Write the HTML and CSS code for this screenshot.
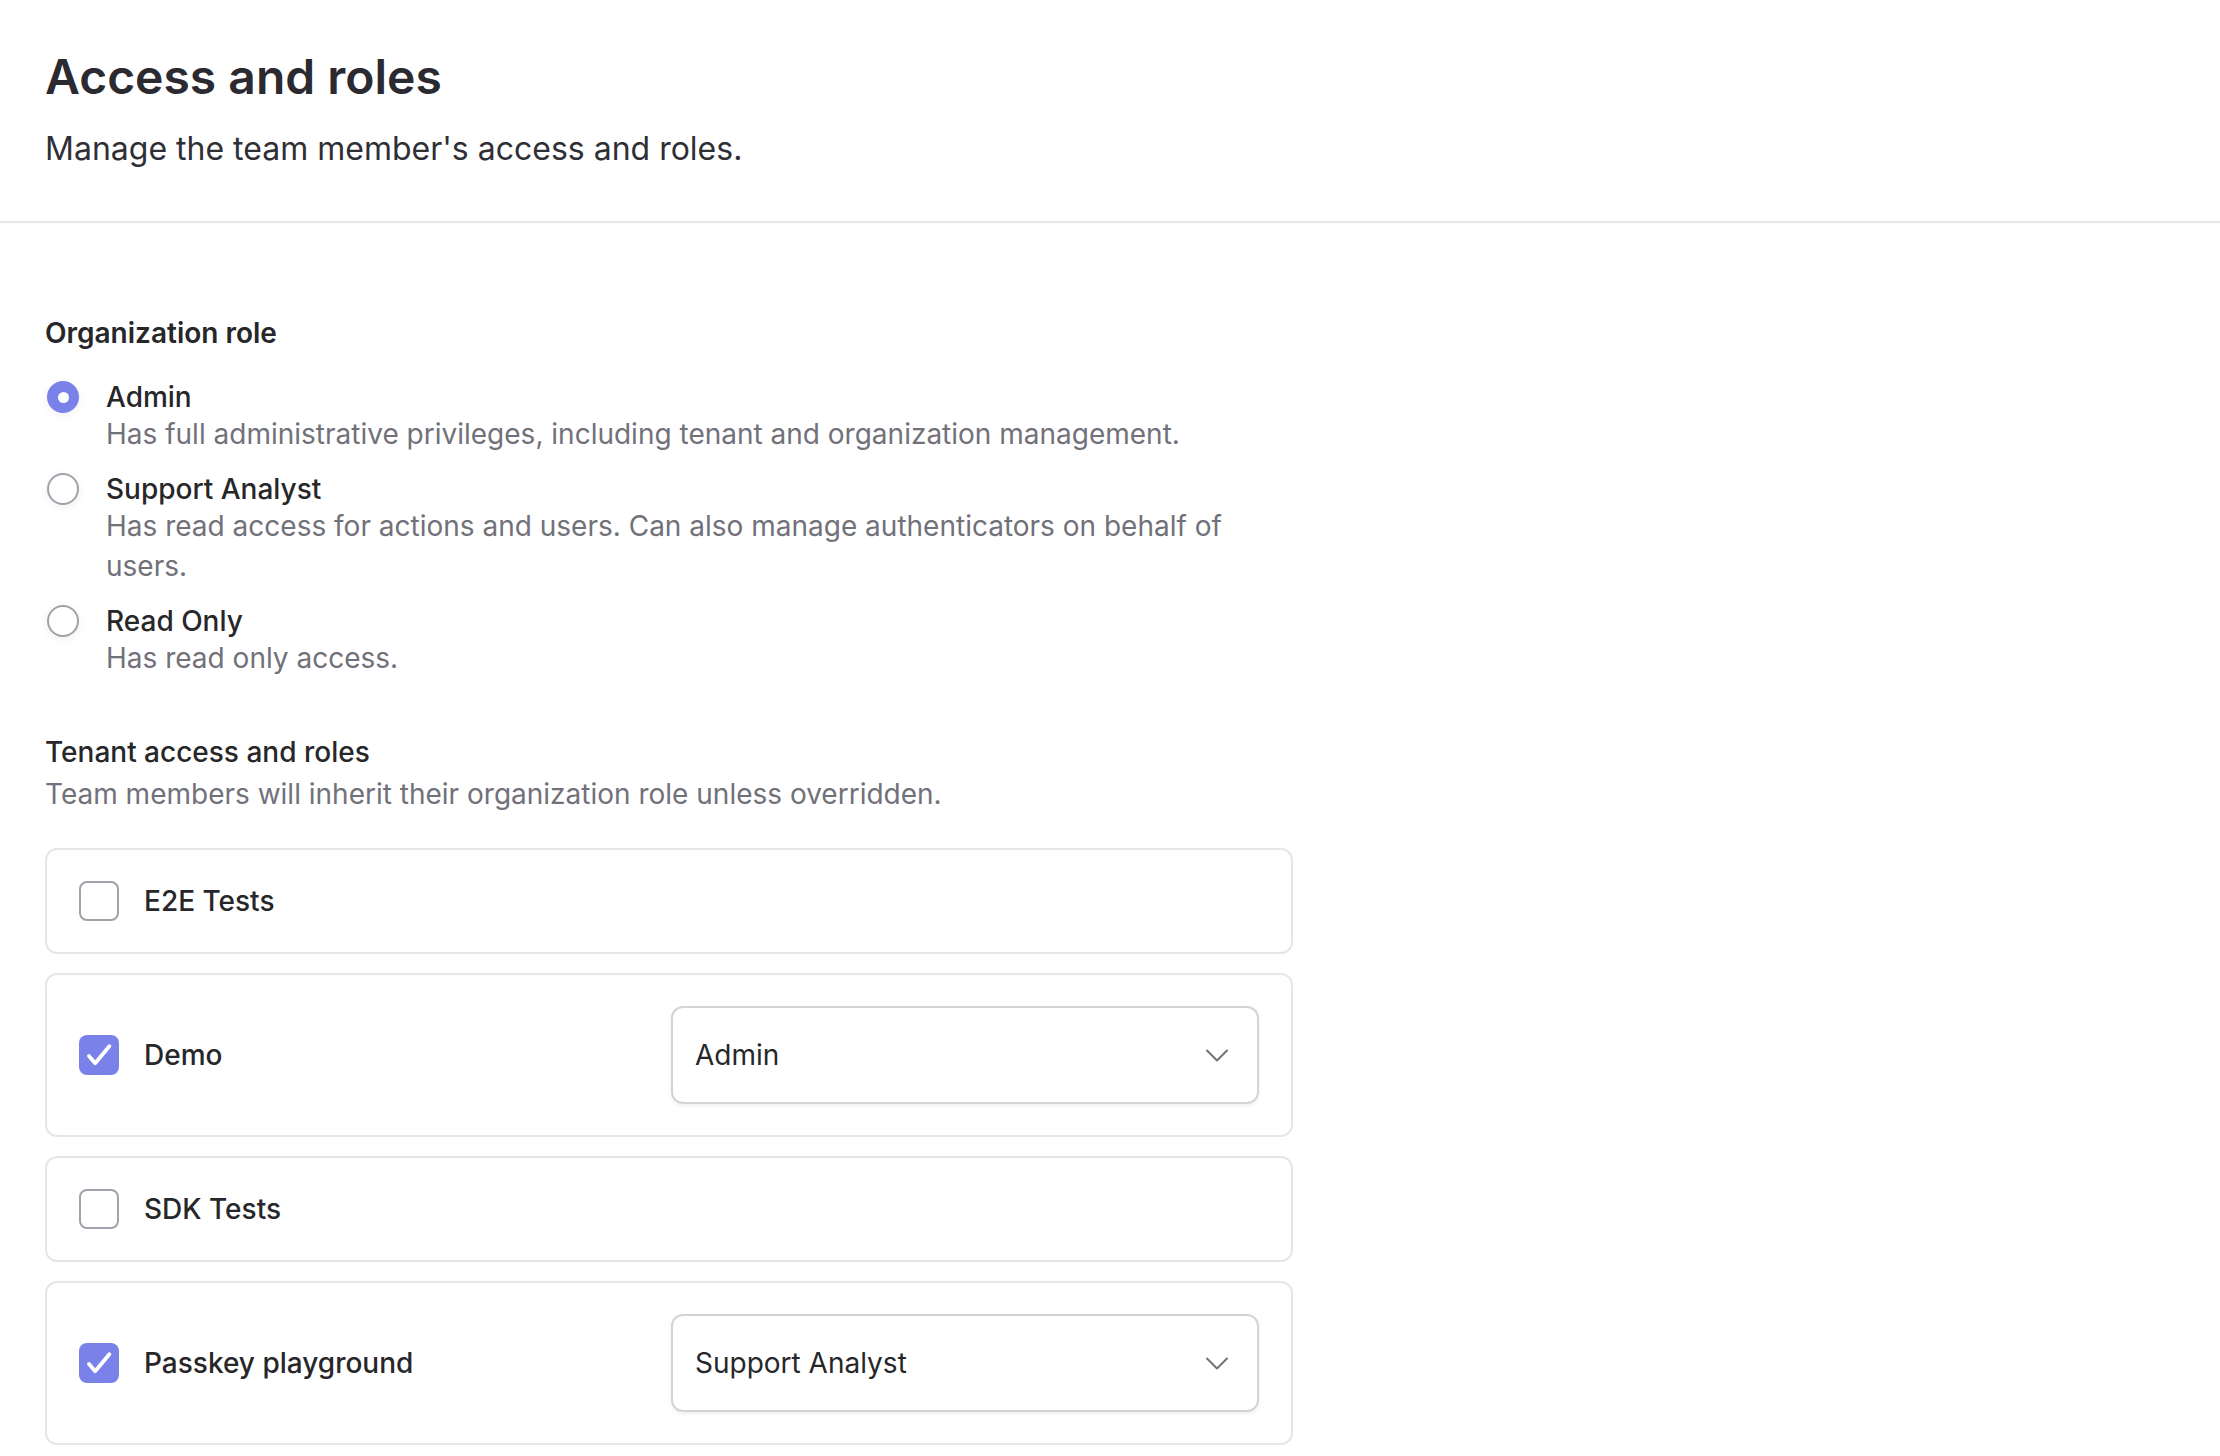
FILE: index.html
```html
<!DOCTYPE html>
<html lang="en">
<head>
<meta charset="utf-8">
<title>Access and roles</title>
<link rel="stylesheet" href="styles.css">
</head>
<body>
<header class="page-header">
  <h1 class="page-title">Access and roles</h1>
  <p class="page-subtitle">Manage the team member's access and roles.</p>
</header>

<main class="content">
  <section class="org-role">
    <h2 class="section-title">Organization role</h2>
    <div class="radio-group">
      <div class="radio-option">
        <span class="radio radio-checked"><span class="radio-dot"></span></span>
        <div class="option-text">
          <div class="option-label">Admin</div>
          <div class="option-desc">Has full administrative privileges, including tenant and organization management.</div>
        </div>
      </div>
      <div class="radio-option">
        <span class="radio"></span>
        <div class="option-text">
          <div class="option-label">Support Analyst</div>
          <div class="option-desc">Has read access for actions and users. Can also manage authenticators on behalf of users.</div>
        </div>
      </div>
      <div class="radio-option">
        <span class="radio"></span>
        <div class="option-text">
          <div class="option-label">Read Only</div>
          <div class="option-desc">Has read only access.</div>
        </div>
      </div>
    </div>
  </section>

  <section class="tenants">
    <h2 class="tenant-title">Tenant access and roles</h2>
    <p class="tenant-desc">Team members will inherit their organization role unless overridden.</p>

    <div class="tenant-list">
      <div class="tenant-card">
        <div class="tenant-main">
          <span class="checkbox"></span>
          <span class="tenant-name">E2E Tests</span>
        </div>
      </div>

      <div class="tenant-card">
        <div class="tenant-main">
          <span class="checkbox checkbox-checked">
            <svg viewBox="0 0 24 24" width="40" height="40"><path d="M6 12.6l3.7 4.3L18.2 6.8" fill="none" stroke="#fff" stroke-width="2.3" stroke-linecap="round" stroke-linejoin="round"/></svg>
          </span>
          <span class="tenant-name">Demo</span>
        </div>
        <div class="select">
          <span class="select-value">Admin</span>
          <svg class="chevron" viewBox="0 0 24 13" width="24" height="13"><path d="M2 1.5l10 10 10-10" fill="none" stroke="#71717a" stroke-width="2" stroke-linecap="round" stroke-linejoin="round"/></svg>
        </div>
      </div>

      <div class="tenant-card">
        <div class="tenant-main">
          <span class="checkbox"></span>
          <span class="tenant-name">SDK Tests</span>
        </div>
      </div>

      <div class="tenant-card">
        <div class="tenant-main">
          <span class="checkbox checkbox-checked">
            <svg viewBox="0 0 24 24" width="40" height="40"><path d="M6 12.6l3.7 4.3L18.2 6.8" fill="none" stroke="#fff" stroke-width="2.3" stroke-linecap="round" stroke-linejoin="round"/></svg>
          </span>
          <span class="tenant-name">Passkey playground</span>
        </div>
        <div class="select">
          <span class="select-value">Support Analyst</span>
          <svg class="chevron" viewBox="0 0 24 13" width="24" height="13"><path d="M2 1.5l10 10 10-10" fill="none" stroke="#71717a" stroke-width="2" stroke-linecap="round" stroke-linejoin="round"/></svg>
        </div>
      </div>
    </div>
  </section>
</main>
</body>
</html>
```

FILE: styles.css
```css
* {
  box-sizing: border-box;
}

html, body {
  margin: 0;
  padding: 0;
  background: #ffffff;
}

body {
  font-family: "Inter", "Noto Sans", "Liberation Sans", sans-serif;
  color: #27272a;
  -webkit-font-smoothing: antialiased;
}

.page-header {
  padding: 45px 45px 48px 45px;
  border-bottom: 2px solid #e6e6ea;
}

.page-title {
  margin: 0;
  font-size: 48px;
  line-height: 64px;
  font-weight: 600;
  color: #2a2a30;
}

.page-subtitle {
  margin: 16px 0 0 0;
  font-size: 32px;
  line-height: 48px;
  font-weight: 400;
  color: #2f2f36;
}

.content {
  padding: 90px 45px 0 45px;
  width: 1340px;
}

.section-title {
  margin: 0;
  font-size: 28px;
  line-height: 40px;
  font-weight: 600;
  color: #27272a;
}

.radio-group {
  margin-top: 27px;
  display: flex;
  flex-direction: column;
  gap: 18px;
}

.radio-option {
  display: grid;
  grid-template-columns: 32px 1fr;
  column-gap: 27px;
  padding-left: 2px;
}

.radio {
  width: 32px;
  height: 32px;
  margin-top: 1px;
  border-radius: 50%;
  border: 2px solid #a1a1aa;
  background: #ffffff;
  box-shadow: 0 2px 8px rgba(0, 0, 0, 0.07);
  display: flex;
  align-items: center;
  justify-content: center;
}

.radio-checked {
  border-color: #7a82ea;
  background: #7a82ea;
}

.radio-dot {
  width: 11px;
  height: 11px;
  border-radius: 50%;
  background: #ffffff;
}

.option-label {
  font-size: 28px;
  line-height: 34px;
  font-weight: 500;
  color: #27272a;
}

.option-desc {
  font-size: 28px;
  line-height: 40px;
  font-weight: 400;
  color: #71717a;
}

.tenants {
  margin-top: 54px;
}

.tenant-title {
  margin: 0;
  font-size: 28px;
  line-height: 40px;
  font-weight: 500;
  color: #27272a;
}

.tenant-desc {
  margin: 2px 0 0 0;
  font-size: 28px;
  line-height: 40px;
  font-weight: 400;
  color: #71717a;
}

.tenant-list {
  margin-top: 34px;
  width: 1248px;
  display: flex;
  flex-direction: column;
  gap: 19px;
}

.tenant-card {
  border: 2px solid #e6e6ea;
  border-radius: 12px;
  padding: 31px 32px;
  display: grid;
  grid-template-columns: 1fr 1fr;
  column-gap: 4px;
  align-items: center;
}

.tenant-main {
  display: flex;
  align-items: center;
  gap: 25px;
}

.checkbox {
  width: 40px;
  height: 40px;
  flex: none;
  border: 2px solid #a1a1aa;
  border-radius: 8px;
  background: #ffffff;
  display: flex;
  align-items: center;
  justify-content: center;
}

.checkbox-checked {
  border: none;
  background: #7a82ea;
}

.tenant-name {
  font-size: 28px;
  line-height: 40px;
  font-weight: 500;
  color: #27272a;
}

.select {
  height: 98px;
  border: 2px solid #d4d4d8;
  border-radius: 12px;
  padding: 0 28px 0 22px;
  display: flex;
  align-items: center;
  justify-content: space-between;
  box-shadow: 0 2px 4px rgba(0, 0, 0, 0.06);
  background: #ffffff;
}

.select-value {
  font-size: 28px;
  line-height: 40px;
  font-weight: 400;
  color: #27272a;
}

.chevron {
  display: block;
  flex: none;
}
```
